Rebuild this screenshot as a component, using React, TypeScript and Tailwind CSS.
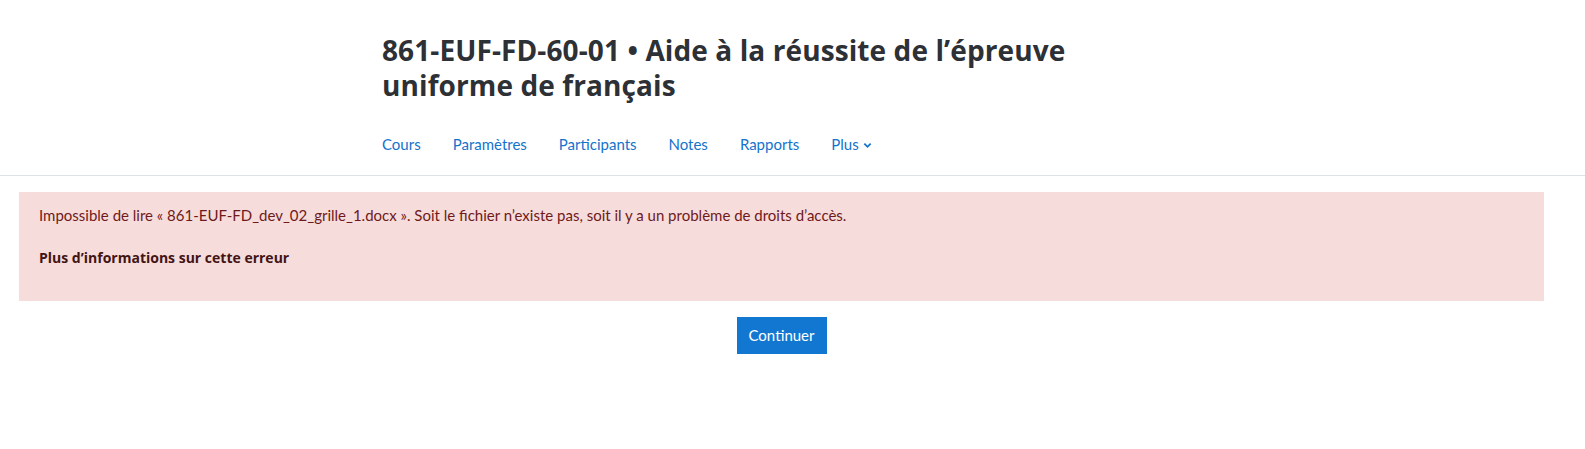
import React from "react";

const navItems = ["Cours", "Paramètres", "Participants", "Notes", "Rapports"];

function App() {
  return (
    <div className="min-h-screen bg-white font-['Lato',sans-serif]">
      <header className="border-b border-[#dee2e6]">
        <div className="pl-[382px] pt-[33px] pb-[11px]">
          <h1 className="font-['Open_Sans',sans-serif] text-[28px] font-bold leading-[34.5px] tracking-[0.1px] text-[#2d3035]">
            861-EUF-FD-60-01 • Aide à la réussite de l’épreuve
            <br />
            uniforme de français
          </h1>
          <nav className="mt-[23px] flex gap-8 text-[15px] leading-[22.5px] text-[#1473cc]">
            {navItems.map((item) => (
              <a key={item} className="py-2">
                {item}
              </a>
            ))}
            <a className="flex items-center gap-1 py-2">
              Plus
              <svg width="9" height="9" viewBox="0 0 10 10" className="mt-[2px]">
                <path d="M1.5 3l3.5 3.5L8.5 3" fill="none" stroke="currentColor" strokeWidth="2" />
              </svg>
            </a>
          </nav>
        </div>
      </header>
      <main className="pl-[19px] pr-[41px] pt-4">
        <div className="h-[109px] bg-[#f7dcdc] px-5 pt-3 text-[15px] leading-[22.5px] text-[#6e1a1a]">
          <p>
            Impossible de lire « 861-EUF-FD_dev_02_grille_1.docx ». Soit le fichier n’existe pas, soit il y a un problème de droits d’accès.
          </p>
          <p className="mt-[20.5px] font-['Open_Sans',sans-serif] text-[14px] font-bold text-[#421414]">
            Plus d’informations sur cette erreur
          </p>
        </div>
        <div className="mt-4 flex justify-center">
          <button className="h-[37px] bg-[#1177d1] px-3 text-[15px] text-white">Continuer</button>
        </div>
      </main>
    </div>
  );
}

export default App;
